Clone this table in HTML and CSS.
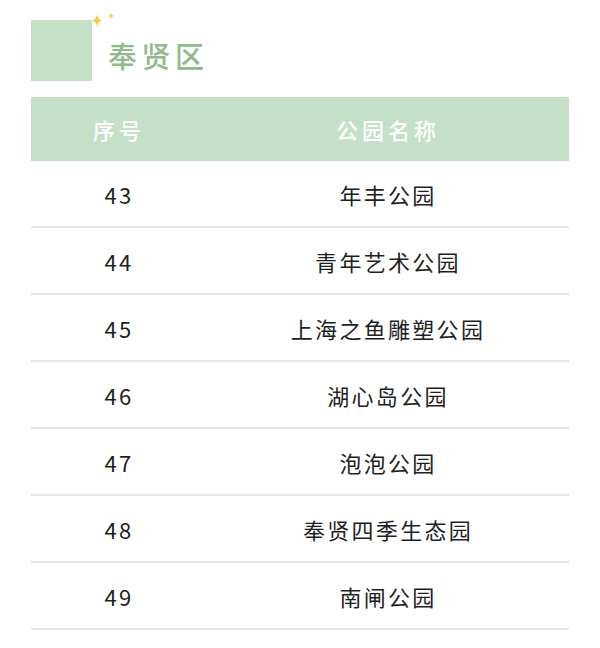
FILE: index.html
```html
<!DOCTYPE html>
<html lang="zh">
<head>
<meta charset="utf-8">
<link rel="stylesheet" href="styles.css">
</head>
<body>
<div class="page">
  <div class="title-row">
    <div class="square">
      <svg class="sparkle" width="30" height="16" viewBox="0 0 30 16">
        <path d="M6 3.5 Q7 8.5 11 9.5 Q7 10.5 6 15.5 Q5 10.5 1 9.5 Q5 8.5 6 3.5 Z" fill="#f6c94a"/>
        <path d="M20 1.5 Q20.6 4.4 23 5 Q20.6 5.6 20 8.5 Q19.4 5.6 17 5 Q19.4 4.4 20 1.5 Z" fill="#f8d46a"/>
      </svg>
    </div>
    <h1 class="title">奉贤区</h1>
  </div>
  <div class="table">
    <div class="row head"><div class="c1">序号</div><div class="c2">公园名称</div></div>
    <div class="row"><div class="c1">43</div><div class="c2">年丰公园</div></div>
    <div class="row"><div class="c1">44</div><div class="c2">青年艺术公园</div></div>
    <div class="row"><div class="c1">45</div><div class="c2">上海之鱼雕塑公园</div></div>
    <div class="row"><div class="c1">46</div><div class="c2">湖心岛公园</div></div>
    <div class="row"><div class="c1">47</div><div class="c2">泡泡公园</div></div>
    <div class="row"><div class="c1">48</div><div class="c2">奉贤四季生态园</div></div>
    <div class="row"><div class="c1">49</div><div class="c2">南闸公园</div></div>
  </div>
</div>
</body>
</html>
```
FILE: styles.css
```css
html, body {
  margin: 0;
  padding: 0;
  background: #ffffff;
}
.page {
  padding: 20px 31px 0 31px;
  font-family: "Noto Sans CJK SC", "Noto Sans", sans-serif;
}
.title-row {
  display: flex;
  align-items: center;
  gap: 16px;
  height: 61px;
}
.square {
  position: relative;
  width: 61px;
  height: 61px;
  background: #c4e1c6;
  flex: none;
}
.sparkle {
  position: absolute;
  left: 60px;
  top: -9px;
}
.title {
  margin: 10px 0 0 0;
  font-size: 29px;
  font-weight: 500;
  letter-spacing: 4.5px;
  color: #8fba8c;
  line-height: 1;
}
.table {
  margin-top: 16px;
  width: 538px;
}
.row {
  display: grid;
  grid-template-columns: 174px 364px;
  height: 65px;
  align-items: center;
  border-bottom: 2px solid #e5e5e5;
  font-size: 22px;
  color: #1e1e1e;
  letter-spacing: 2.3px;
  line-height: 1;
}
.row.head {
  height: 64px;
  border-bottom: none;
  background: #c4e1c7;
  color: #ffffff;
  font-size: 22px;
  font-weight: 500;
  letter-spacing: 4px;
}
.c1, .c2 {
  text-align: center;
}
.c1 {
  padding-left: 2px;
}
.c2 {
  padding-left: 2px;
}
```
